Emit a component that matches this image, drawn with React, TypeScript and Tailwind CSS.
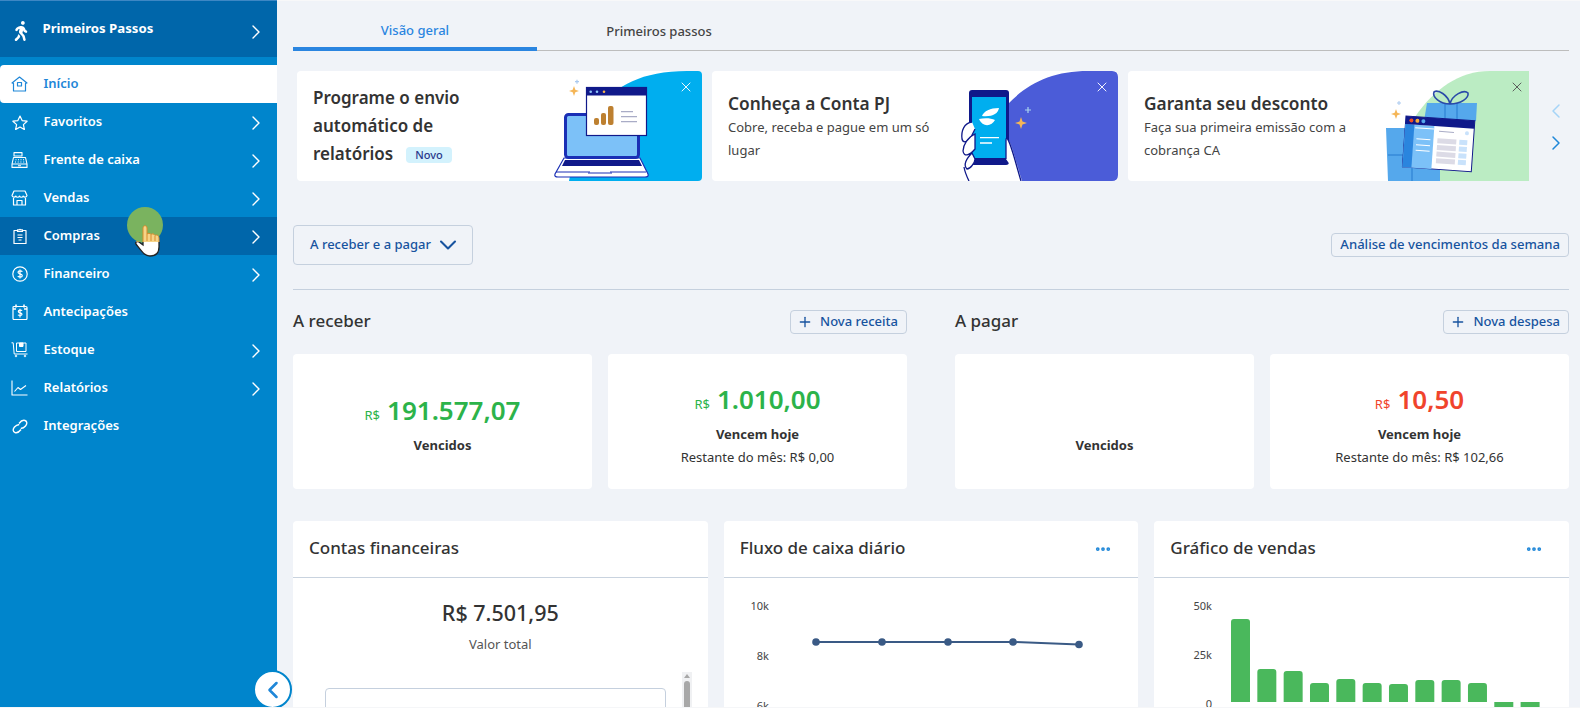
import { ChevronRight, ChevronLeft, ChevronDown, Plus, X, Ellipsis } from 'lucide-react'
import { FaWalking } from 'react-icons/fa'

const font = { fontFamily: '"Noto Sans", sans-serif' }

function HomeIcon() {
  return (
    <svg width="17" height="16" viewBox="0 0 17 16" fill="none" stroke="currentColor" strokeWidth="1.2" strokeLinejoin="round">
      <path d="M1 7 8.5 1 16 7l-1.5 .4V15h-12V7.400z" />
      <rect x="6.500" y="6.500" width="4" height="3.500" />
    </svg>
  )
}
function StarIcon() {
  return (
    <svg width="16" height="15" viewBox="0 0 16 15" fill="none" stroke="currentColor" strokeWidth="1.2" strokeLinejoin="round">
      <path d="M8 1l2.100 4.600 5 .6-3.700 3.400 1 5L8 12.100 3.600 14.600l1-5L.9 6.200l5-.6z" />
    </svg>
  )
}
function RegisterIcon() {
  return (
    <svg width="17" height="16" viewBox="0 0 17 16" fill="none" stroke="currentColor" strokeWidth="1.1" strokeLinejoin="round">
      <rect x="3" y=".6" width="8" height="3.400" />
      <path d="M2.500 5.500h12l1.500 6.500H1zM1 12h15v3.400H1z" />
      <path d="M4.500 7.800h1M7 7.800h1M9.500 7.800h1M12 7.800h1M4 10h1M6.700 10h1M9.400 10h1M12.200 10h1M7 13.700h3" />
    </svg>
  )
}
function StoreIcon() {
  return (
    <svg width="17" height="16" viewBox="0 0 17 16" fill="none" stroke="currentColor" strokeWidth="1.2" strokeLinejoin="round">
      <path d="M3 1h11l2 4.500a2 2 0 0 1-3.800 .5 2 2 0 0 1-3.700 0 2 2 0 0 1-3.700 0A2 2 0 0 1 1 5.500z" />
      <path d="M2.500 8v7h12V8M6 15v-4.500h5V15" />
    </svg>
  )
}
function ClipboardIcon() {
  return (
    <svg width="14" height="16" viewBox="0 0 14 16" fill="none" stroke="currentColor" strokeWidth="1.2" strokeLinejoin="round">
      <path d="M4 2.500H1v13h12v-13h-3" />
      <path d="M4.500 3.500V1.800h1.700a1 1 0 0 1 1.600 0h1.700v1.700zM4.500 7h5M4.500 9.500h5M5.500 12h3" />
    </svg>
  )
}
function DollarIcon() {
  return (
    <svg width="16" height="16" viewBox="0 0 16 16" fill="none" stroke="currentColor" strokeWidth="1.2">
      <circle cx="8" cy="8" r="7.200" />
      <path d="M10.300 5.800C9.800 4.700 6 4.300 6 6.300 6 8.500 10.300 7.300 10.300 9.700 10.300 11.700 6.300 11.300 5.800 10.100M8 3.500v9" />
    </svg>
  )
}
function CalendarIcon() {
  return (
    <svg width="16" height="16" viewBox="0 0 16 16" fill="none" stroke="currentColor" strokeWidth="1.2" strokeLinejoin="round">
      <rect x="1" y="2.500" width="14" height="13" rx="1" />
      <path d="M4 .5v3M12 .5v3M1 5h3M12 5h3" strokeWidth="1.600" />
      <path d="M10 6.800C9.600 6 6.300 5.700 6.300 7.500 6.300 9.300 10 8.400 10 10.300 10 12 6.600 11.700 6 10.700M8 4.800v8.600" />
    </svg>
  )
}
function StockIcon() {
  return (
    <svg width="17" height="16" viewBox="0 0 17 16" fill="none" stroke="currentColor" strokeWidth="1" strokeLinejoin="round">
      <path d="M.5 .8h1.700l1 11.200H16.500" />
      <rect x="5.500" y="1" width="9.500" height="8.500" />
      <rect x="8.500" y="1" width="3.500" height="3.500" fill="currentColor" />
      <circle cx="5" cy="14" r=".8" />
      <circle cx="14" cy="14" r=".8" />
    </svg>
  )
}
function ChartIcon() {
  return (
    <svg width="17" height="16" viewBox="0 0 17 16" fill="none" stroke="currentColor" strokeWidth="1.1" strokeLinejoin="round">
      <path d="M1 .5V15h15.500" />
      <path d="M3.500 11.500 7 7.500l2.500 2L15 5.500" />
    </svg>
  )
}
function LinkIcon() {
  return (
    <svg width="16" height="15" viewBox="0 0 16 15" fill="none" stroke="currentColor" strokeWidth="1.4">
      <path d="M7 4.500C8.500 2.500 10.700 .8 13 1.500c2.300 .8 2.300 3.500 .5 5.500-1.300 1.400-3.200 2.600-4.700 2.200" />
      <path d="M9 10.500C7.500 12.500 5.300 14.200 3 13.500 .7 12.700 .7 10 2.500 8c1.300-1.400 3.200-2.600 4.700-2.200" />
    </svg>
  )
}

const menu = [
  { label: 'Favoritos', icon: <StarIcon />, arrow: true },
  { label: 'Frente de caixa', icon: <RegisterIcon />, arrow: true },
  { label: 'Vendas', icon: <StoreIcon />, arrow: true },
  { label: 'Compras', icon: <ClipboardIcon />, arrow: true, hover: true },
  { label: 'Financeiro', icon: <DollarIcon />, arrow: true },
  { label: 'Antecipações', icon: <CalendarIcon />, arrow: false },
  { label: 'Estoque', icon: <StockIcon />, arrow: true },
  { label: 'Relatórios', icon: <ChartIcon />, arrow: true },
  { label: 'Integrações', icon: <LinkIcon />, arrow: false },
]

const handPath = 'M9 5C9 2 13 2 13 5V11C14 10 16 10 17 11.500 18 10.500 20 10.500 21 12.500 22 11.500 25 12 25 15V24C25 30 22 33 16 33 11 33 9 30 2 21 1 19 3 18 5 19L9 22Z'

function Cursor() {
  return (
    <>
      <span className="absolute left-[127px] top-[206px] w-[36px] h-[36px] rounded-full bg-[#7ab35f]" />
      <svg className="absolute left-[134px] top-[222px]" width="28" height="36" viewBox="0 0 28 36">
        <clipPath id="in-circle"><rect width="28" height="19" /></clipPath>
        <clipPath id="out-circle"><rect y="19" width="28" height="17" /></clipPath>
        <path d={handPath} fill="#fff" stroke="#222" strokeWidth="1.300" clipPath="url(#out-circle)" />
        <path d={handPath} fill="#f6d488" stroke="#d78c2c" strokeWidth="1" clipPath="url(#in-circle)" />
        <path d="M13 11v7M17 12v6M21 13v5" stroke="#d78c2c" strokeWidth="1" />
      </svg>
    </>
  )
}

function Sidebar() {
  return (
    <aside className="relative w-[277px] h-full shrink-0 bg-[#0085cc] text-white border-t border-[#3d87c4]">
      <div className="h-[56px] mb-2 flex items-center pl-[11px] pr-[9px] bg-[#0066aa]">
        <FaWalking size={20} className="mt-[4px]" />
        <span className="ml-[11.500px] text-[13.2px] font-bold">Primeiros Passos</span>
        <ChevronRight size={24} strokeWidth={1.4} className="ml-auto mt-[6px]" />
      </div>
      <div className="h-[38px] flex items-center gap-[15.500px] pl-[11px] bg-white text-[#1f87d8] rounded-l-sm">
        <HomeIcon />
        <span className="text-[13px] font-semibold">Início</span>
      </div>
      {menu.map(item => (
        <div key={item.label} className={`h-[38px] flex items-center pl-[11px] pr-[9px] ${item.hover ? 'bg-[#0066aa]' : ''}`}>
          <span className="w-[32.500px] flex"><span className="w-[17px] flex justify-center">{item.icon}</span></span>
          <span className="text-[13px] font-semibold">{item.label}</span>
          {item.arrow && <ChevronRight size={24} strokeWidth={1.4} className="ml-auto mt-[2px]" />}
        </div>
      ))}
      <button className="absolute left-[253px] top-[669px] z-10 w-[39px] h-[39px] rounded-full bg-white border-2 border-[#0085cc] flex items-center justify-center text-[#1f87d8]">
        <ChevronLeft size={28} strokeWidth={2.200} />
      </button>
      <Cursor />
    </aside>
  )
}

function LaptopArt() {
  return (
    <svg className="absolute right-0 top-0" width="150" height="110" viewBox="0 0 150 110">
      <path d="M17 110C30 60 45 0 135 0h15v110z" fill="#00aeef" />
      <path d="M3 103 12 87h76l8 16q1 3-3 3H6q-4 0-3-3z" fill="#fff" stroke="#1a2fb5" strokeWidth="1.200" />
      <path d="M4 101h34M58 101h36M36 102h24" stroke="#1a2fb5" strokeWidth="1" />
      <rect x="13.500" y="43.500" width="73" height="43" rx="3" fill="#7cc1f8" stroke="#1a2fb5" strokeWidth="3" />
      <path d="M13 89h74l3 6H10z" fill="#10198a" />
      <rect x="34.500" y="16.500" width="60" height="48" fill="#fff" stroke="#10198a" strokeWidth="1.200" />
      <rect x="34" y="16" width="61" height="8.500" fill="#10198a" />
      <circle cx="38.700" cy="20.700" r="1.300" fill="#8dc5f8" />
      <circle cx="45" cy="20.700" r="1.300" fill="#8dc5f8" />
      <circle cx="52" cy="20.700" r="1.300" fill="#f5b24a" />
      <rect x="42" y="47" width="5" height="7" rx="2" fill="#bd8030" />
      <rect x="49" y="42" width="5" height="12" rx="2" fill="#bd8030" />
      <rect x="56" y="35" width="5.500" height="19" rx="2" fill="#bd8030" />
      <path d="M69 40.700h12M69 45.700h16M69 50.700h16" stroke="#a9acc6" strokeWidth="1.200" />
      <path d="M22 15l1.300 3.700 3.700 1.300-3.700 1.300L22 25l-1.300-3.700L17 20l3.700-1.300z" fill="#f5b657" />
      <path d="M23 10.700h4M25 8.700v4" stroke="#a9c9ef" strokeWidth="1.200" />
    </svg>
  )
}

function PhoneArt() {
  return (
    <svg className="absolute right-0 top-0" width="160" height="110" viewBox="0 0 160 110">
      <path d="M50 33C70 12 95 0 130 0h24q6 0 6 6v98q0 6-6 6H64C58 92 54 72 49 67z" fill="#4b5cd8" />
      <rect x="11" y="19" width="40" height="75" rx="3" fill="#10198a" />
      <rect x="14" y="26" width="34" height="61" fill="#00aeef" />
      <path d="M24 45c2-5 8-8 17-8-1 6-7 9-17 8zM21 48c5-1 12-1 16 1-3 6-12 8-16-1z" fill="#fff" />
      <path d="M22 66.700h19M22 72h12" stroke="#fff" strokeWidth="1.300" />
      <path d="M48 88V69q0-2 1-2C53 72 57 90 63 110" fill="#fff" stroke="#10198a" strokeWidth="1.300" />
      <path d="M14 51C6 52 3 60 4 68 5 72 9 72 13 66L17 58" fill="#fff" stroke="#10198a" strokeWidth="1.300" />
      <path d="M17 63C10 66 5 74 5 80 6 86 11 85 17 78z" fill="#fff" stroke="#10198a" strokeWidth="1.300" />
      <path d="M14 82C8 88 5 94 9 98 12 98 17 92 17 88z" fill="#fff" stroke="#10198a" strokeWidth="1.300" />
      <path d="M6 96C7 102 9 106 11 110" fill="none" stroke="#10198a" strokeWidth="1.300" />
      <path d="M63 46l1.500 4.500 4.500 1.500-4.500 1.500L63 58l-1.500-4.500L57 52l4.500-1.500z" fill="#f5b657" />
      <path d="M67 39h6M70 36v6" stroke="#a9d3ef" strokeWidth="1.200" />
    </svg>
  )
}

function GiftArt() {
  return (
    <svg className="absolute right-0 top-0" width="160" height="110" viewBox="0 0 160 110">
      <path d="M41 46C60 18 85 0 116 0h44v110H66z" fill="#bbecc3" />
      <path d="M53 32h50l-1 18H50z" fill="#55a8ec" />
      <path d="M71 32v16M83 32v16" stroke="#1a6fc9" strokeWidth=".8" />
      <path d="M76 33C66 33 58 26 60 21c4-3 14 3 16 12 2-9 14-15 18-11 1 5-7 11-18 11z" fill="none" stroke="#2a4aa8" strokeWidth="1.600" />
      <path d="M12 57h26v27h28v26H14z" fill="#55a8ec" />
      <path d="M38 84v26M14 84h24" stroke="#1a6fc9" strokeWidth=".8" />
      <g transform="translate(32 45) rotate(4)">
        <rect width="69" height="51" fill="#fff" stroke="#10198a" strokeWidth="1" />
        <rect x="0" y="8" width="29" height="43" fill="#7cc1f8" />
        <rect x="0" y="8" width="9" height="43" fill="#2a85de" />
        <rect width="69" height="8" fill="#10198a" />
        <circle cx="5.700" cy="4" r="2" fill="#ef4a23" />
        <circle cx="11.700" cy="4" r="2" fill="#f5a93a" />
        <circle cx="17.700" cy="4" r="2" fill="#55a8ec" />
        <path d="M12 22h14M12 28h14M12 33.500h14M10 11h19" stroke="#fff" strokeWidth="1" />
        <path d="M34 13h15" stroke="#a9acc6" strokeWidth="1" />
        <circle cx="62" cy="13" r="2" fill="#c9e2fb" />
        {[20, 26.7, 33.4, 40].map(y => (
          <g key={y}>
            <rect x="33" y={y} width="19" height="5" fill="#dcdbe6" />
            <rect x="55" y={y} width="8" height="5" fill="#c9e2fb" />
          </g>
        ))}
      </g>
      <path d="M22 38l1.300 3.700 3.700 1.300-3.700 1.300L22 48l-1.300-3.700L17 43l3.700-1.300z" fill="#f5b657" />
      <path d="M23 32h4M25 30v4" stroke="#a9c9ef" strokeWidth="1" />
    </svg>
  )
}

function Banners() {
  return (
    <div className="flex items-center mt-[20px] pl-[4px]">
      <div className="w-[1232px] flex gap-[10px] overflow-hidden">
        <div className="relative w-[405px] h-[110px] shrink-0 bg-white rounded overflow-hidden pl-[16px] pt-[13px] text-[#333]">
          <p className="text-[17px] font-semibold leading-[28px]">Programe o envio<br />automático de<br />relatórios
            <span className="inline-block ml-[13px] px-[9px] h-[16px] rounded bg-[#d3f2fd] text-[#2c3a8c] text-[11px] leading-[16px] font-medium align-[1px]">Novo</span>
          </p>
          <LaptopArt />
          <X size={16} strokeWidth={1.400} className="absolute right-[8px] top-[8px] text-white" />
        </div>
        <div className="relative w-[406px] h-[110px] shrink-0 bg-white rounded overflow-hidden pl-[16px] pt-[21px] text-[#333]">
          <p className="text-[17.300px] font-semibold leading-[24px]">Conheça a Conta PJ</p>
          <p className="text-[13px] leading-[23px] w-[225px] text-[#444]">Cobre, receba e pague em um só lugar</p>
          <PhoneArt />
          <X size={16} strokeWidth={1.400} className="absolute right-[8px] top-[8px] text-white" />
        </div>
        <div className="relative w-[406px] h-[110px] shrink-0 bg-white rounded-l overflow-hidden pl-[16px] pt-[21px] text-[#333]">
          <p className="text-[17.300px] font-semibold leading-[24px]">Garanta seu desconto</p>
          <p className="text-[13px] leading-[23px] w-[225px] text-[#444]">Faça sua primeira emissão com a cobrança CA</p>
          <GiftArt />
          <X size={16} strokeWidth={1.400} className="absolute right-[9px] top-[8px] text-[#555]" />
        </div>
      </div>
      <div className="flex flex-col items-center gap-[8px] ml-[15px] mt-[2px]">
        <ChevronLeft size={24} strokeWidth={1.500} className="text-[#a5d4f7]" />
        <ChevronRight size={24} strokeWidth={1.500} className="text-[#1f87d8]" />
      </div>
    </div>
  )
}

function Amount({ value, color }: { value: string; color: string }) {
  return (
    <p className={`flex items-baseline justify-center gap-[7px] ${color}`}>
      <span className="text-[13px]">R$</span>
      <span className="text-[26px] font-semibold leading-[34px]">{value}</span>
    </p>
  )
}

function Section({ title, action, children }: { title: string; action: string; children: React.ReactNode }) {
  return (
    <section className="w-[614px]">
      <div className="flex items-center justify-between h-[24px]">
        <h2 className="text-[17px] font-medium text-[#333] pb-[2px]">{title}</h2>
        <button className="h-[24px] pl-[6px] pr-[8px] flex items-center gap-[7px] border border-[#c5d0de] rounded text-[#17539f] text-[13px] font-medium">
          <Plus size={16} strokeWidth={2} />{action}
        </button>
      </div>
      <div className="grid grid-cols-2 gap-[16px] mt-[20px]">{children}</div>
    </section>
  )
}

function SmallCard({ amount, color, label, rest }: { amount?: string; color?: string; label: string; rest?: string }) {
  return (
    <div className="h-[135px] bg-white rounded text-center flex flex-col items-center text-[#333]">
      <div className={rest ? 'h-[28px]' : 'h-[39px]'} />
      {amount && color ? <Amount value={amount} color={color} /> : <div className="h-[34px]" />}
      <p className="text-[13px] font-bold leading-[18px] mt-[9px]">{label}</p>
      {rest && <p className="text-[13px] leading-[18px] mt-[5px]">{rest}</p>}
    </div>
  )
}

function PanelHead({ title, menu }: { title: string; menu?: boolean }) {
  return (
    <div className="h-[57px] border-b border-[#c9d3df] flex items-center justify-between pl-[16px] pr-[26px]">
      <h3 className="text-[17px] font-medium text-[#333] pb-[2px]">{title}</h3>
      {menu && <Ellipsis size={18} strokeWidth={3} className="text-[#1f87d8]" />}
    </div>
  )
}

function LineChart() {
  const pts = [[92, 46], [158, 46], [224, 46], [289, 46], [355, 48.5]]
  return (
    <svg width="415" height="140" viewBox="0 0 415 140" style={font}>
      <g fontSize="11" fill="#444" textAnchor="end">
        <text x="45" y="14">10k</text>
        <text x="45" y="64">8k</text>
        <text x="45" y="114">6k</text>
      </g>
      <polyline points={pts.map(p => p.join(',')).join(' ')} fill="none" stroke="#3a5a85" strokeWidth="2" />
      {pts.map(p => <circle key={p[0]} cx={p[0]} cy={p[1]} r="3.800" fill="#3a5a85" />)}
    </svg>
  )
}

function BarChart() {
  const heights = [83, 33, 31, 19, 23, 19, 18, 22, 22, 19]
  return (
    <svg width="415" height="140" viewBox="0 0 415 140" style={font}>
      <g fontSize="11" fill="#444" textAnchor="end">
        <text x="58" y="14">50k</text>
        <text x="58" y="63">25k</text>
        <text x="58" y="112">0</text>
      </g>
      {heights.map((h, i) => (
        <rect key={i} x={77 + i * 26.33} y={106 - h} width="19" height={h + 3} rx="3" fill="#4ab85c" />
      ))}
      <rect x="77" y="106" width="290" height="3" fill="#fff" />
      <rect x="340.300" y="106" width="19" height="20" fill="#4ab85c" />
      <rect x="366.600" y="106" width="19" height="20" fill="#4ab85c" />
    </svg>
  )
}

export default function App() {
  return (
    <div className="w-[1580px] h-[708px] bg-[#f5f6f8]" style={font}>
      <div className="flex h-[707px] overflow-hidden bg-[#f0f3f8]">
        <Sidebar />
        <main className="flex-1 pl-[16px] pr-[11px] min-w-0 border-t border-[#f8f8f9]">
          <div className="flex h-[50px] border-b border-[#bdbdbd]">
            <div className="w-[244px] h-[50px] flex items-center justify-center border-b-4 border-[#2a85e0] text-[#2a85e0] text-[13px] font-medium pt-[14px]">Visão geral</div>
            <div className="w-[244px] flex items-center justify-center text-[#444] text-[13px] font-medium pt-[13px]">Primeiros passos</div>
          </div>
          <Banners />
          <div className="flex items-center justify-between mt-[44px] h-[40px]">
            <button className="w-[180px] h-[40px] pl-[16px] flex items-center gap-[3px] border border-[#c5d0de] rounded text-[#17539f] text-[13px] font-medium">
              A receber e a pagar<ChevronDown size={28} strokeWidth={1.800} />
            </button>
            <button className="h-[24px] px-[8px] border border-[#c5d0de] rounded text-[#17539f] text-[13.100px] font-medium">Análise de vencimentos da semana</button>
          </div>
          <div className="mt-[24px] border-t border-[#c5d0de]" />
          <div className="flex justify-between mt-[20px]">
            <Section title="A receber" action="Nova receita">
              <SmallCard amount="191.577,07" color="text-[#2cb34a]" label="Vencidos" />
              <SmallCard amount="1.010,00" color="text-[#2cb34a]" label="Vencem hoje" rest="Restante do mês: R$ 0,00" />
            </Section>
            <Section title="A pagar" action="Nova despesa">
              <SmallCard label="Vencidos" />
              <SmallCard amount="10,50" color="text-[#f0442c]" label="Vencem hoje" rest="Restante do mês: R$ 102,66" />
            </Section>
          </div>
          <div className="grid grid-cols-3 gap-[16px] mt-[32px]">
            <div className="h-[300px] bg-white rounded">
              <PanelHead title="Contas financeiras" />
              <div className="text-center pt-[21px] text-[#333]">
                <p className="text-[21.500px] font-medium leading-[28px]">R$ 7.501,95</p>
                <p className="text-[13px] text-[#555] mt-[8px]">Valor total</p>
              </div>
              <div className="flex gap-[16px] pl-[32px] mt-[17px]">
                <div className="w-[341px] h-[100px] mt-[16px] border border-[#c5d0de] rounded" />
                <div className="w-[10px] h-[60px] bg-[#f0f1f3] flex flex-col items-center pt-[2px]">
                  <span className="w-0 h-0 border-x-[3px] border-x-transparent border-b-[4px] border-b-[#a8a8a8]" />
                  <span className="w-[6px] h-[40px] mt-[3px] rounded bg-[#a8a8a8]" />
                </div>
              </div>
            </div>
            <div className="h-[300px] bg-white rounded">
              <PanelHead title="Fluxo de caixa diário" menu />
              <div className="pt-[18px]"><LineChart /></div>
            </div>
            <div className="h-[300px] bg-white rounded">
              <PanelHead title="Gráfico de vendas" menu />
              <div className="pt-[18px]"><BarChart /></div>
            </div>
          </div>
        </main>
      </div>
    </div>
  )
}
